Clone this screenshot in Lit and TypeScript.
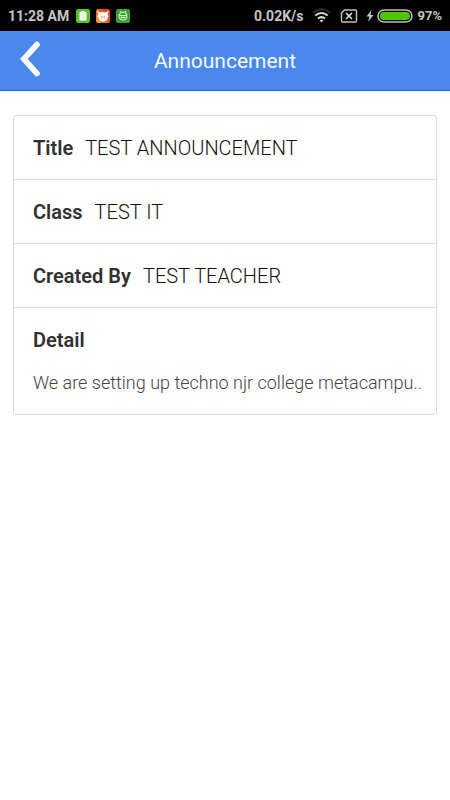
import { LitElement, html, css } from "lit";
import { customElement, property } from "lit/decorators.js";

@customElement("status-bar")
class StatusBar extends LitElement {
  static styles = css`
    :host {
      display: flex;
      justify-content: space-between;
      align-items: center;
      height: 31px;
      padding: 0 8px;
      background: #000;
      color: #c4c4c4;
      font-size: 14px;
      line-height: 16px;
      font-weight: 700;
      white-space: nowrap;
    }
    .group {
      display: flex;
      align-items: center;
    }
    svg {
      display: block;
    }
    .apps {
      display: flex;
      gap: 6px;
      margin-left: 7px;
    }
    .wifi {
      margin-left: 9px;
    }
    .sim {
      margin-left: 9px;
    }
    .bolt {
      margin-left: 8px;
    }
    .battery {
      margin-left: 3px;
    }
    .percent {
      margin-left: 4px;
      font-size: 13px;
    }
  `;

  render() {
    return html`
      <div class="group">
        <span>11:28 AM</span>
        <span class="apps">
          <svg width="14" height="14" viewBox="0 0 14 14" aria-hidden="true">
            <rect width="14" height="14" rx="2" fill="#58c322" />
            <path d="M5 2h4v1h1.500v8.500h-7V3H5z" fill="#fff" />
            <path d="M5 5h4v5H5z" fill="#e4f5da" />
          </svg>
          <svg width="14" height="14" viewBox="0 0 14 14" aria-hidden="true">
            <defs>
              <linearGradient id="heat" x1="0" y1="1" x2="1" y2="0">
                <stop offset="0" stop-color="#ffa02c" />
                <stop offset=".5" stop-color="#fa5a28" />
                <stop offset="1" stop-color="#ee2f25" />
              </linearGradient>
            </defs>
            <rect width="14" height="14" rx="2" fill="url(#heat)" />
            <path d="M1 1.500 4.500 3.500Q7 2.700 9.500 3.500L13 1.500 11.500 5.500 12.800 7.500 11.500 8.500Q11.500 12.500 7 12.500T2.500 8.500L1.200 7.500 2.500 5.500Z" fill="#fff" />
            <circle cx="5.700" cy="8" r=".9" fill="#f59a7c" />
            <circle cx="8.300" cy="8" r=".9" fill="#f59a7c" />
          </svg>
          <svg width="14" height="14" viewBox="0 0 14 14" aria-hidden="true">
            <rect width="14" height="14" rx="2" fill="#35a42f" />
            <path d="M4 2 5.200 3.600Q7 3 8.800 3.600L10 2M4.500 4Q3 5.500 3 7.500 3.500 11 7 11T11 7.500Q11 5.500 9.500 4M3 6.500h8M4.500 9 6 8l1 1 1-1 1.500 1" fill="none" stroke="#d5efd2" stroke-width="1.100" />
          </svg>
        </span>
      </div>
      <div class="group">
        <span>0.02K/s</span>
        <svg class="wifi" width="19" height="15" viewBox="0 0 19 15" aria-hidden="true">
          <path d="M1 5Q9.500-2.500 18 5" fill="none" stroke="#2c2c2c" stroke-width="2" />
          <path d="M3.300 7.500q6.200-5 12.400 0M6 10.500q3.500-2.700 7 0" fill="none" stroke="#dcdcdc" stroke-width="2" />
          <path d="M7.500 12.300q2-1.300 4 0l-2 2.200z" fill="#dcdcdc" />
        </svg>
        <svg class="sim" width="18" height="14" viewBox="0 0 18 14" aria-hidden="true">
          <path d="M4.500 1H15.500Q16.500 1 16.500 2V12Q16.500 13 15.500 13H2.500Q1.500 13 1.500 12V4Z" fill="none" stroke="#bdbdbd" stroke-width="1.500" />
          <path d="m6 4 6 6m0-6-6 6" stroke="#dcdcdc" stroke-width="1.700" />
        </svg>
        <svg class="bolt" width="8" height="14" viewBox="0 0 8 14" aria-hidden="true">
          <path d="M5.500 1 .5 7.500h3L2 13l5.500-7h-3z" fill="#c8c8c8" />
        </svg>
        <svg class="battery" width="36" height="14" viewBox="0 0 36 14" aria-hidden="true">
          <rect x="1" y="1" width="34" height="12" rx="6" fill="#000" stroke="#b9b9b9" stroke-width="1.600" />
          <rect x="3" y="3" width="30" height="8" rx="4" fill="#4bc706" />
        </svg>
        <span class="percent">97%</span>
      </div>
    `;
  }
}

@customElement("nav-header")
class NavHeader extends LitElement {
  @property() heading = "";

  static styles = css`
    :host {
      display: grid;
      grid-template-columns: 60px 1fr 60px;
      align-items: center;
      box-sizing: border-box;
      height: 60px;
      background: #4a88ee;
      border-bottom: 1px solid #0c6be4;
    }
    .back {
      display: flex;
      justify-content: center;
      padding: 8px 0 12px;
      border: 0;
      background: none;
      cursor: pointer;
    }
    h1 {
      margin: 0;
      color: #f4f8ff;
      font-size: 21px;
      line-height: 28px;
      font-weight: 400;
      text-align: center;
    }
  `;

  render() {
    return html`
      <button class="back" aria-label="Back">
        <svg width="22" height="38" viewBox="0 0 22 38" aria-hidden="true">
          <path d="M18 4.500 4.800 19 18 33.500" fill="none" stroke="#fff" stroke-width="5.600" stroke-linecap="round" stroke-linejoin="miter" />
        </svg>
      </button>
      <h1>${this.heading}</h1>
    `;
  }
}

@customElement("app-root")
class AppRoot extends LitElement {
  private fields = [
    { label: "Title", value: "TEST ANNOUNCEMENT" },
    { label: "Class", value: "TEST IT" },
    { label: "Created By", value: "TEST TEACHER" },
  ];

  static styles = css`
    :host {
      display: block;
      min-height: 100vh;
      background: #fff;
      font-family: Roboto, "Liberation Sans", sans-serif;
    }
    .card {
      margin: 24px 13px;
      border: 1px solid #dadada;
      border-radius: 3px;
    }
    dl {
      margin: 0;
    }
    .row {
      display: flex;
      align-items: baseline;
      gap: 12px;
      padding: 20px 19px 19px;
      border-bottom: 1px solid #dadada;
      line-height: 24px;
      font-size: 20px;
    }
    .detail {
      display: block;
      border-bottom: 0;
      padding-right: 12px;
    }
    dt {
      color: #303030;
      font-weight: 600;
    }
    dd {
      margin: 0;
      color: #111;
      font-weight: 300;
    }
    .detail dd {
      margin-top: 19px;
      color: #444;
      font-size: 18px;
      white-space: nowrap;
      overflow: hidden;
      text-overflow: ellipsis;
    }
  `;

  render() {
    return html`
      <status-bar></status-bar>
      <nav-header heading="Announcement"></nav-header>
      <main class="card">
        <dl>
          ${this.fields.map(
            (field) => html`
              <div class="row">
                <dt>${field.label}</dt>
                <dd>${field.value}</dd>
              </div>
            `
          )}
          <div class="row detail">
            <dt>Detail</dt>
            <dd>We are setting up techno njr college metacampu..</dd>
          </div>
        </dl>
      </main>
    `;
  }
}
